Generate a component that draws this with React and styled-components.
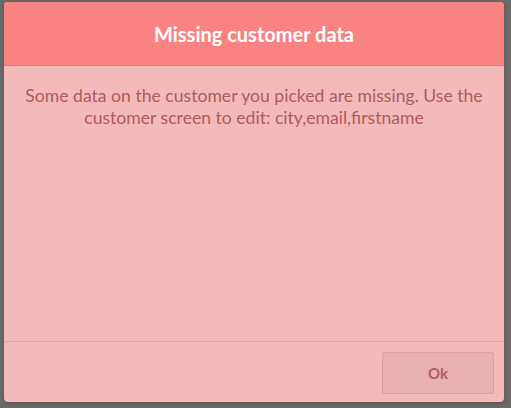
import React from "react";
import styled, { createGlobalStyle } from "styled-components";

const GlobalStyle = createGlobalStyle`
  html, body {
    margin: 0;
    padding: 0;
    background: #6e6a6a;
    font-family: Lato, "Noto Sans", sans-serif;
  }
`;

const Backdrop = styled.div`
  width: 511px;
  height: 408px;
  padding: 2px 0 0 4px;
  box-sizing: border-box;
  background: #6e6a6a;
`;

const Dialog = styled.div`
  width: 500px;
  height: 400px;
  display: flex;
  flex-direction: column;
  background: #f4baba;
  border-radius: 4px;
  overflow: hidden;
  box-shadow: 0 1px 4px rgba(0, 0, 0, 0.25);
`;

const Header = styled.div`
  height: 63px;
  display: flex;
  align-items: center;
  justify-content: center;
  background: #f98383;
  border-bottom: 1px solid #e87878;
  color: #ffffff;
  font-size: 20px;
  font-weight: 700;
`;

const Body = styled.div`
  flex: 1;
  padding: 19px 14px 0;
  color: #b05a5a;
  font-size: 17.6px;
  line-height: 22px;
  text-align: center;
`;

const Footer = styled.div`
  height: 61px;
  display: flex;
  justify-content: flex-end;
  align-items: flex-start;
  padding: 10px 10px 0;
  box-sizing: border-box;
  border-top: 1px solid #e3a4a4;
`;

const Button = styled.button`
  width: 112px;
  height: 42px;
  background: #e8b0b0;
  border: 1px solid #dda2a2;
  border-radius: 2px;
  color: #b35c5c;
  font-family: Lato, "Noto Sans", sans-serif;
  font-size: 15px;
  font-weight: 700;
  cursor: pointer;
`;

export default function App() {
  return (
    <>
      <GlobalStyle />
      <Backdrop>
        <Dialog>
          <Header>Missing customer data</Header>
          <Body>
            Some data on the customer you picked are missing. Use the customer
            screen to edit: city,email,firstname
          </Body>
          <Footer>
            <Button>Ok</Button>
          </Footer>
        </Dialog>
      </Backdrop>
    </>
  );
}
